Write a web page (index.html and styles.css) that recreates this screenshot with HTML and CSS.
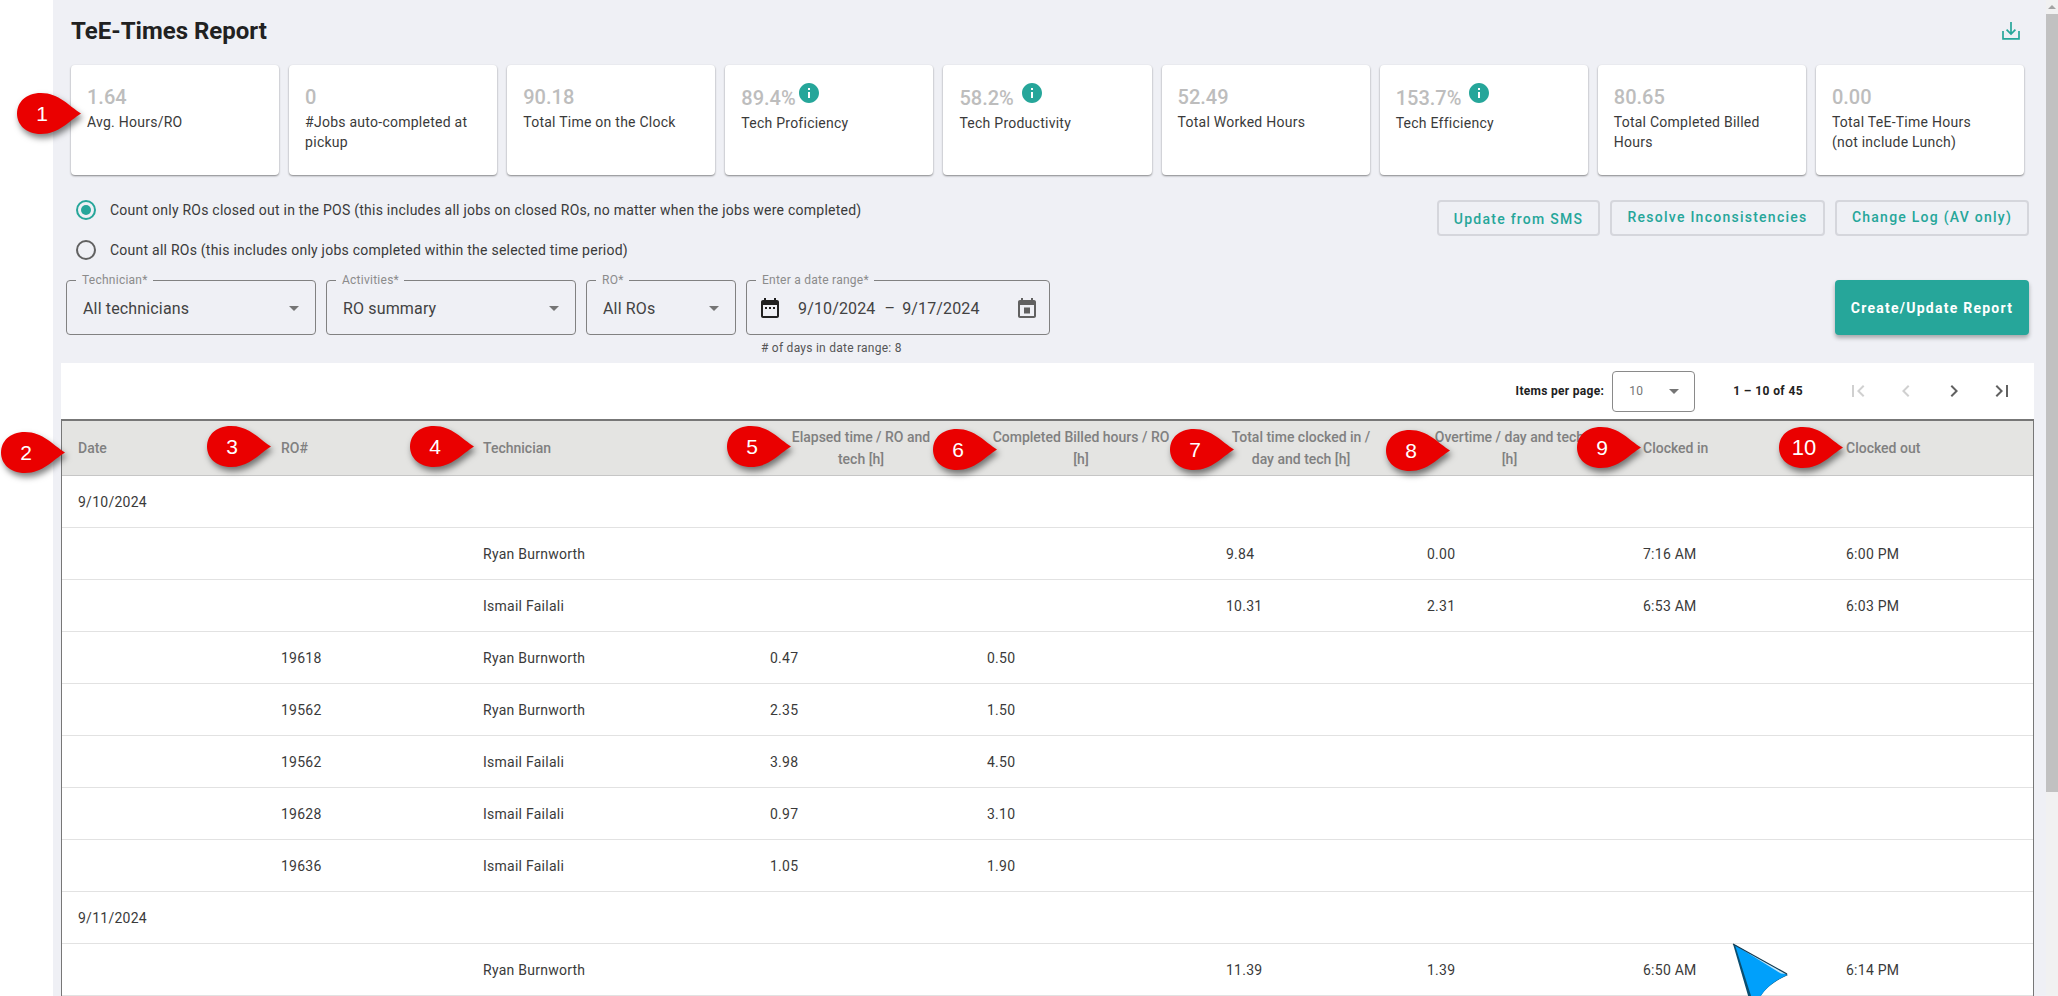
FILE: index.html
```html
<!DOCTYPE html>
<html lang="en">
<head>
<meta charset="utf-8">
<title>TeE-Times Report</title>
<link rel="stylesheet" href="styles.css">
</head>
<body>
<div class="page">
  <div class="gutter"></div>
  <main class="main">
    <header class="head">
      <h1 class="title">TeE-Times Report</h1>
      <svg class="download" viewBox="0 0 18 18"><path d="M9 0v12M4.6 7.6 9 12l4.400-4.400M1 9v7.800h16V9" fill="none" stroke="#26a69a" stroke-width="1.700"/></svg>
    </header>

    <section class="cards">
      <div class="card"><div class="value">1.64</div><div class="label">Avg. Hours/RO</div></div>
      <div class="card"><div class="value">0</div><div class="label">#Jobs auto-completed at pickup</div></div>
      <div class="card"><div class="value">90.18</div><div class="label">Total Time on the Clock</div></div>
      <div class="card info"><div class="value">89.4%<svg class="info-icon tight" viewBox="0 0 24 24"><path d="M12 2C6.480 2 2 6.480 2 12s4.480 10 10 10 10-4.480 10-10S17.520 2 12 2zm1 15h-2v-6h2v6zm0-8h-2V7h2v2z"/></svg></div><div class="label">Tech Proficiency</div></div>
      <div class="card info"><div class="value">58.2%<svg class="info-icon" viewBox="0 0 24 24"><path d="M12 2C6.480 2 2 6.480 2 12s4.480 10 10 10 10-4.480 10-10S17.520 2 12 2zm1 15h-2v-6h2v6zm0-8h-2V7h2v2z"/></svg></div><div class="label">Tech Productivity</div></div>
      <div class="card"><div class="value">52.49</div><div class="label">Total Worked Hours</div></div>
      <div class="card info"><div class="value">153.7%<svg class="info-icon" viewBox="0 0 24 24"><path d="M12 2C6.480 2 2 6.480 2 12s4.480 10 10 10 10-4.480 10-10S17.520 2 12 2zm1 15h-2v-6h2v6zm0-8h-2V7h2v2z"/></svg></div><div class="label">Tech Efficiency</div></div>
      <div class="card"><div class="value">80.65</div><div class="label">Total Completed Billed Hours</div></div>
      <div class="card"><div class="value">0.00</div><div class="label">Total TeE-Time Hours<br>(not include Lunch)</div></div>
    </section>

    <section class="options">
      <div class="radios">
        <div class="radio-row"><span class="radio on"></span>Count only ROs closed out in the POS (this includes all jobs on closed ROs, no matter when the jobs were completed)</div>
        <div class="radio-row"><span class="radio"></span>Count all ROs (this includes only jobs completed within the selected time period)</div>
      </div>
      <div class="actions">
        <button class="btn low">Update from SMS</button>
        <button class="btn">Resolve Inconsistencies</button>
        <button class="btn">Change Log (AV only)</button>
      </div>
    </section>

    <section class="filters">
      <fieldset class="field w-tech"><legend>Technician*</legend><div class="field-body"><span class="field-value">All technicians</span><i class="caret"></i></div></fieldset>
      <fieldset class="field w-act"><legend>Activities*</legend><div class="field-body"><span class="field-value">RO summary</span><i class="caret"></i></div></fieldset>
      <fieldset class="field w-ro"><legend>RO*</legend><div class="field-body"><span class="field-value">All ROs</span><i class="caret"></i></div></fieldset>
      <div class="date-wrap">
        <fieldset class="field w-date"><legend>Enter a date range*</legend>
          <div class="field-body date-body">
            <svg class="cal dark" viewBox="3 2 18 20"><path d="M9 11H7v2h2v-2zm4 0h-2v2h2v-2zm4 0h-2v2h2v-2zm2-7h-1V2h-2v2H8V2H6v2H5c-1.110 0-1.990.9-1.990 2L3 20c0 1.100.89 2 2 2h14c1.100 0 2-.9 2-2V6c0-1.100-.9-2-2-2zm0 16H5V9h14v11z"/></svg>
            <span class="dates">9/10/2024<span class="dash">–</span>9/17/2024</span>
            <svg class="cal gray" viewBox="3 1 18 20"><path d="M15 10.500H9v6h6v-6zM16 1v2H8V1H6v2H5c-1.110 0-1.990.9-1.990 2L3 19c0 1.100.89 2 2 2h14c1.100 0 2-.9 2-2V5c0-1.100-.9-2-2-2h-1V1h-2zm3 18H5V8h14v11z"/></svg>
          </div>
        </fieldset>
        <div class="hint"># of days in date range: 8</div>
      </div>
      <button class="create">Create/Update Report</button>
    </section>

    <section class="panel">
      <div class="pager">
        <span class="pager-label">Items per page:</span>
        <div class="pager-select"><span>10</span><i class="caret"></i></div>
        <span class="pager-range">1 – 10 of 45</span>
        <svg class="pager-btn off" viewBox="0 0 24 24"><path d="M18.410 16.590 13.820 12l4.590-4.590L17 6l-6 6 6 6zM6 6h2v12H6z"/></svg>
        <svg class="pager-btn off" viewBox="0 0 24 24"><path d="M15.410 7.410 14 6l-6 6 6 6 1.410-1.410L10.830 12z"/></svg>
        <svg class="pager-btn" viewBox="0 0 24 24"><path d="M10 6 8.590 7.410 13.170 12l-4.580 4.590L10 18l6-6z"/></svg>
        <svg class="pager-btn" viewBox="0 0 24 24"><path d="M5.590 7.410 10.180 12l-4.590 4.590L7 18l6-6-6-6zM16 6h2v12h-2z"/></svg>
      </div>
      <table class="report">
        <colgroup>
          <col class="c1"><col class="c2"><col class="c3"><col class="c4"><col class="c5"><col class="c6"><col class="c7"><col class="c8"><col class="c9">
        </colgroup>
        <thead>
          <tr>
            <th>Date</th><th>RO#</th><th>Technician</th>
            <th class="mid p19">Elapsed time / RO and<br>tech [h]</th>
            <th class="mid p35">Completed Billed hours / RO<br>[h]</th>
            <th class="mid p35">Total time clocked in /<br>day and tech [h]</th>
            <th class="mid p35">Overtime / day and tech<br>[h]</th>
            <th>Clocked in</th><th>Clocked out</th>
          </tr>
        </thead>
        <tbody>
          <tr><td>9/10/2024</td><td></td><td></td><td></td><td></td><td></td><td></td><td></td><td></td></tr>
          <tr><td></td><td></td><td>Ryan Burnworth</td><td></td><td></td><td>9.84</td><td>0.00</td><td>7:16 AM</td><td>6:00 PM</td></tr>
          <tr><td></td><td></td><td>Ismail Failali</td><td></td><td></td><td>10.31</td><td>2.31</td><td>6:53 AM</td><td>6:03 PM</td></tr>
          <tr><td></td><td>19618</td><td>Ryan Burnworth</td><td>0.47</td><td>0.50</td><td></td><td></td><td></td><td></td></tr>
          <tr><td></td><td>19562</td><td>Ryan Burnworth</td><td>2.35</td><td>1.50</td><td></td><td></td><td></td><td></td></tr>
          <tr><td></td><td>19562</td><td>Ismail Failali</td><td>3.98</td><td>4.50</td><td></td><td></td><td></td><td></td></tr>
          <tr><td></td><td>19628</td><td>Ismail Failali</td><td>0.97</td><td>3.10</td><td></td><td></td><td></td><td></td></tr>
          <tr><td></td><td>19636</td><td>Ismail Failali</td><td>1.05</td><td>1.90</td><td></td><td></td><td></td><td></td></tr>
          <tr><td>9/11/2024</td><td></td><td></td><td></td><td></td><td></td><td></td><td></td><td></td></tr>
          <tr><td></td><td></td><td>Ryan Burnworth</td><td></td><td></td><td>11.39</td><td>1.39</td><td>6:50 AM</td><td>6:14 PM</td></tr>
        </tbody>
      </table>
    </section>
  </main>
  <div class="scrollbar"><i class="scroll-up"></i><div class="thumb"></div></div>

  <div class="pin n1"><svg viewBox="0 0 65 41"><path d="M64 20.500C52 13 42 0 24 0 8 0 0 10 0 20.500S8 41 24 41c18 0 28-13 40-20.500z"/></svg><span>1</span></div>
  <div class="pin n2"><svg viewBox="0 0 65 41"><path d="M64 20.500C52 13 42 0 24 0 8 0 0 10 0 20.500S8 41 24 41c18 0 28-13 40-20.500z"/></svg><span>2</span></div>
  <div class="pin n3"><svg viewBox="0 0 65 41"><path d="M64 20.500C52 13 42 0 24 0 8 0 0 10 0 20.500S8 41 24 41c18 0 28-13 40-20.500z"/></svg><span>3</span></div>
  <div class="pin n4"><svg viewBox="0 0 65 41"><path d="M64 20.500C52 13 42 0 24 0 8 0 0 10 0 20.500S8 41 24 41c18 0 28-13 40-20.500z"/></svg><span>4</span></div>
  <div class="pin n5"><svg viewBox="0 0 65 41"><path d="M64 20.500C52 13 42 0 24 0 8 0 0 10 0 20.500S8 41 24 41c18 0 28-13 40-20.500z"/></svg><span>5</span></div>
  <div class="pin n6"><svg viewBox="0 0 65 41"><path d="M64 20.500C52 13 42 0 24 0 8 0 0 10 0 20.500S8 41 24 41c18 0 28-13 40-20.500z"/></svg><span>6</span></div>
  <div class="pin n7"><svg viewBox="0 0 65 41"><path d="M64 20.500C52 13 42 0 24 0 8 0 0 10 0 20.500S8 41 24 41c18 0 28-13 40-20.500z"/></svg><span>7</span></div>
  <div class="pin n8"><svg viewBox="0 0 65 41"><path d="M64 20.500C52 13 42 0 24 0 8 0 0 10 0 20.500S8 41 24 41c18 0 28-13 40-20.500z"/></svg><span>8</span></div>
  <div class="pin n9"><svg viewBox="0 0 65 41"><path d="M64 20.500C52 13 42 0 24 0 8 0 0 10 0 20.500S8 41 24 41c18 0 28-13 40-20.500z"/></svg><span>9</span></div>
  <div class="pin n10"><svg viewBox="0 0 65 41"><path d="M64 20.500C52 13 42 0 24 0 8 0 0 10 0 20.500S8 41 24 41c18 0 28-13 40-20.500z"/></svg><span>10</span></div>

  <svg class="pointer" viewBox="0 0 58 56">
    <path d="M1 1 17 56h10C32 46 42 38 56 32z" fill="#0a4f72"/>
    <path d="M3 2 20 56h7C32 46 42 38 55 32z" fill="#00a0fb"/>
    <path d="M3 2 55 31l-6-.5z" fill="#bfe6fb"/>
    <path d="M1 1 55 31" fill="none" stroke="#123a50" stroke-width="1.200"/>
  </svg>
</div>
</body>
</html>
```

FILE: styles.css
```css
* { box-sizing: border-box; }
html, body { margin: 0; height: 100%; overflow: hidden; }
body { font-family: Roboto, "Liberation Sans", sans-serif; color: #333; background: #fff; }

.page { position: relative; display: flex; width: 100%; height: 996px; overflow: hidden; }
.gutter { width: 53px; flex: none; background: #fff; }
.main { flex: 1; min-width: 0; background: #eff0f5; display: flex; flex-direction: column; }

.scrollbar { width: 12px; flex: none; background: #f1f1f1; display: flex; flex-direction: column; align-items: center; }
.scroll-up { margin-top: 5px; height: 0; width: 0; border: 4px solid transparent; border-top: 0; border-bottom: 4px solid #a3a3a3; }
.thumb { margin-top: 5px; width: 100%; height: 778px; background: #c1c1c1; }

.head { display: flex; justify-content: space-between; padding: 16px 26px 19px 18px; height: 65px; }
.title { margin: 0; font-size: 24px; line-height: 30px; font-weight: 700; color: #212121; }
.download { width: 18px; height: 18px; margin-top: 6px; }

.cards { display: grid; grid-template-columns: repeat(9, 1fr); gap: 10px; height: 110px; margin: 0 22px 0 18px; }
.card { background: #fff; border-radius: 4px; padding: 20px 16px 0; box-shadow: 0 1px 2px rgba(0,0,0,.45); }
.value { display: flex; align-items: flex-start; height: 24px; font-size: 20px; line-height: 24px; font-weight: 500; color: #bdbdbd; margin-bottom: 3px; }
.card.info .value { height: 25px; line-height: 26px; }
.info-icon { width: 24px; height: 24px; margin: -4px 0 0 6px; fill: #26a69a; flex: none; }
.info-icon.tight { margin-left: 1px; }
.label { font-size: 14px; line-height: 20px; letter-spacing: .25px; color: #3a3a3a; }

.options { display: flex; justify-content: space-between; margin-top: 25px; padding: 0 17px 0 23px; height: 80px; }
.radios { display: flex; flex-direction: column; gap: 20px; }
.radio-row { display: flex; align-items: center; height: 20px; font-size: 14px; letter-spacing: .24px; color: #3a3a3a; }
.radio { width: 20px; height: 20px; margin-right: 14px; border-radius: 50%; border: 2px solid #616161; display: flex; align-items: center; justify-content: center; flex: none; }
.radio.on { border-color: #26a69a; }
.radio.on::after { content: ""; width: 10px; height: 10px; border-radius: 50%; background: #26a69a; }
.actions { display: flex; gap: 10px; align-items: flex-start; }
.btn { height: 36px; padding: 0 0 2px; width: 194px; background: transparent; border: 2px solid #d5d6dc; border-radius: 4px; font: 500 14px/20px Roboto, sans-serif; letter-spacing: 1.25px; color: #26a69a; }
.btn:nth-child(1) { width: 163px; }
.btn:nth-child(2) { width: 215px; }
.btn.low { padding: 2px 0 0; }

.filters { display: flex; align-items: flex-start; gap: 10px; padding: 0 17px 0 13px; margin-top: -7px; height: 90px; }
.field { margin: 0; padding: 0; height: 62px; border: 1px solid #818181; border-radius: 4px; min-width: 0; }
.field legend { margin-left: 9px; padding: 0 5px 0 6px; font-size: 12px; line-height: 14px; letter-spacing: .25px; color: #8b8b8b; }
.field-body { display: flex; align-items: center; height: 47px; padding: 0 16px 5px; }
.field-value { flex: 1; font-size: 16px; letter-spacing: .15px; color: #424242; }
.w-tech, .w-act { width: 250px; }
.w-ro { width: 150px; }
.w-date { width: 304px; }
.date-body { padding: 0 13px 5px 14px; }
.caret { display: block; width: 0; height: 0; border: 5px solid transparent; border-bottom: 0; border-top: 5px solid #757575; }
.date-wrap { display: flex; flex-direction: column; }
.cal { width: 18px; height: 20px; flex: none; }
.cal.dark { fill: #212121; }
.cal.gray { fill: #616161; }
.dates { flex: 1; padding-left: 19px; font-size: 16px; letter-spacing: .15px; color: #424242; }
.dash { margin: 0 7px 0 9px; }
.hint { padding: 6px 0 0 15px; font-size: 12px; line-height: 14px; letter-spacing: .25px; color: #555; }
.create { width: 194px; height: 55px; margin: 7px 0 0 auto; background: #26a69a; color: #fff; border: 0; border-radius: 4px; font: 700 14px/20px Roboto, sans-serif; letter-spacing: 1.25px; box-shadow: 0 3px 4px rgba(0,0,0,.3); }

.panel { flex: 1; min-height: 0; margin: 0 12px 0 8px; background: #fff; }
.pager { display: flex; align-items: center; height: 56px; padding: 0 8px 0 0; justify-content: flex-end; }
.pager-label { font-size: 12px; font-weight: 700; color: #212121; letter-spacing: .3px; }
.pager-select { display: flex; align-items: center; justify-content: space-between; width: 83px; height: 41px; margin: 0 38px 0 8px; padding: 0 15px 0 16px; border: 1px solid #8a8a8a; border-radius: 4px; font-size: 12px; letter-spacing: .4px; color: #757575; }
.pager-range { margin-right: 31px; font-size: 12px; font-weight: 700; color: #212121; letter-spacing: .4px; }
.pager-btn { width: 24px; height: 24px; margin: 0 12px; fill: #616161; flex: none; }
.pager-btn.off { fill: #d0d0d0; }

.report { width: 100%; table-layout: fixed; border-collapse: separate; border-spacing: 0; border-top: 2px solid #777; border-left: 1px solid #777; border-right: 1px solid #777; }
.report col.c1 { width: 203px; }
.report col.c2 { width: 202px; }
.report col.c3 { width: 287px; }
.report col.c4 { width: 217px; }
.report col.c5 { width: 239px; }
.report col.c6 { width: 201px; }
.report col.c7 { width: 216px; }
.report col.c8 { width: 203px; }
.report col.c9 { width: 203px; }
.report th { height: 55px; padding: 0 16px; background: #e4e4e2; border-bottom: 1px solid #c6c6c6; text-align: left; font-size: 14px; line-height: 22px; font-weight: 500; color: #808080; white-space: nowrap; }
.report th.mid { text-align: center; }
.report th.p19 { padding-right: 19px; }
.report th.p35 { padding-right: 35px; }
.report td { height: 52px; padding: 0 16px; border-bottom: 1px solid #e2e2e2; font-size: 14px; letter-spacing: .25px; color: #3a3a3a; white-space: nowrap; }

.pin { position: absolute; width: 65px; height: 41px; }
.pin svg { display: block; width: 65px; height: 41px; fill: #ea0000; overflow: visible; filter: drop-shadow(2px 4px 3px rgba(0,0,0,.5)); }
.pin span { position: absolute; left: 0; top: 0; width: 50px; line-height: 41px; text-align: center; font-family: "Liberation Sans", Arial, sans-serif; font-size: 21px; color: #fff; }
.pin.n1 { left: 17px; top: 93px; }
.pin.n2 { left: 1px; top: 432px; }
.pin.n3 { left: 207px; top: 426px; }
.pin.n4 { left: 410px; top: 426px; }
.pin.n5 { left: 727px; top: 426px; }
.pin.n6 { left: 933px; top: 429px; }
.pin.n7 { left: 1170px; top: 429px; }
.pin.n8 { left: 1386px; top: 430px; }
.pin.n9 { left: 1577px; top: 427px; }
.pin.n10 { left: 1779px; top: 427px; }
.pin.n10 span { font-size: 22px; }

.pointer { position: absolute; left: 1732px; top: 943px; width: 58px; height: 56px; }
```
